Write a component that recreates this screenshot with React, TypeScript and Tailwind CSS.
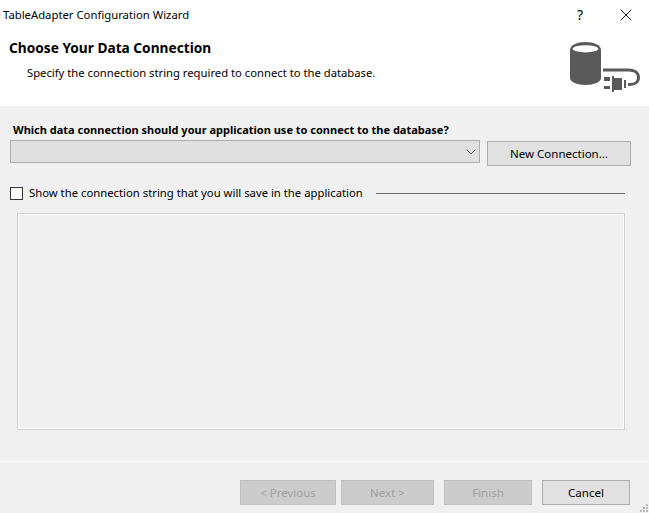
import { X, ChevronDown } from "lucide-react";

function DbPlugIcon() {
  return (
    <svg width="72" height="52" viewBox="0 0 72 52" className="block">
      {/* cylinder */}
      <path
        d="M0 8 C0 3 7 0 15.5 0 C24 0 31 3 31 8 L31 36 C31 40 24 43 15.5 43 C7 43 0 40 0 36 Z"
        fill="#595959"
      />
      <ellipse cx="15.5" cy="6.8" rx="12.8" ry="3.6" fill="#ffffff" />
      {/* cord */}
      <path d="M33 28 H59 C65.5 28 68.5 31.5 68.5 35.5 C68.5 40 65 42.5 60 42.5 H58" fill="none" stroke="#595959" strokeWidth="3" />
      {/* plug */}
      <rect x="34" y="35" width="6" height="4" fill="#595959" />
      <rect x="34" y="44" width="6" height="3" fill="#595959" />
      <rect x="42" y="34" width="2" height="16" fill="#595959" />
      <rect x="44" y="36" width="8" height="12" fill="#595959" />
      <rect x="54" y="38" width="2" height="8" fill="#595959" />
    </svg>
  );
}

function WizardButton({ label, disabled, className }: { label: string; disabled?: boolean; className: string }) {
  return (
    <div
      className={`h-[25px] flex items-center justify-center border text-[11.5px] ${
        disabled ? "bg-[#cccccc] border-[#bfbfbf] text-[#a0a0a0]" : "bg-[#e1e1e1] border-[#adadad] text-black"
      } ${className}`}
    >
      {label}
    </div>
  );
}

export default function App() {
  return (
    <div
      className="w-[649px] h-[513px] flex flex-col overflow-hidden bg-[#f0f0f0] text-[11.3px] leading-[16px] text-black relative"
      style={{ fontFamily: '"Noto Sans", "Open Sans", sans-serif' }}
    >
      {/* Title + header */}
      <div className="bg-white h-[106px] flex-shrink-0 flex flex-col">
        <div className="flex items-center h-[30px] pl-[3px]">
          <span className="flex-1">TableAdapter Configuration Wizard</span>
          <span className="w-[12px] text-center text-[14px] mr-[30px]">?</span>
          <X className="w-[20px] h-[20px] mr-[13px]" strokeWidth={1.1} />
        </div>
        <div className="flex pl-[9px]">
          <div className="flex-1">
            <h1 className="font-bold text-[13.7px] leading-[18px] mt-[9px]">Choose Your Data Connection</h1>
            <p className="ml-[18px] mt-[8px] text-[11.25px]">Specify the connection string required to connect to the database.</p>
          </div>
          <div className="mr-[7px] mt-[12px]">
            <DbPlugIcon />
          </div>
        </div>
      </div>

      {/* Body */}
      <div className="flex-1 flex flex-col">
        <p className="font-bold text-[11px] ml-[13px] mt-[16px]">Which data connection should your application use to connect to the database?</p>
        <div className="flex items-start ml-[10px] mt-[2px]">
          <div className="w-[470px] h-[23px] bg-[#e0e0e0] border border-[#adadad] flex items-center justify-end">
            <ChevronDown className="w-[16px] h-[16px] text-[#404040]" strokeWidth={1.25} />
          </div>
          <WizardButton label="New Connection..." className="w-[144px] ml-[7px] mt-px" />
        </div>

        <div className="flex items-center ml-[10px] mr-[24px] mt-[19px]">
          <div className="w-[13px] h-[13px] bg-white border border-[#333333]" />
          <span className="ml-[6px]">Show the connection string that you will save in the application</span>
          <div className="w-[249px] h-px bg-[#6d6d6d] ml-auto" />
        </div>

        <div className="ml-[17px] mt-[12px] w-[608px] h-[217px] bg-[#f0f0f0] border border-[#d0d0d0] shadow-[inset_-1px_-1px_0_#ffffff,inset_1px_1px_0_#ffffff]" />

        <div className="mt-[31px] h-px bg-white" />

        {/* Footer buttons */}
        <div className="flex mt-[18px] ml-[240px]">
          <WizardButton label="< Previous" disabled className="w-[96px]" />
          <WizardButton label="Next >" disabled className="w-[93px] ml-[5px]" />
          <WizardButton label="Finish" disabled className="w-[88px] ml-[10px]" />
          <WizardButton label="Cancel" className="w-[88px] ml-[10px]" />
        </div>
      </div>

      {/* Resize grip */}
      <svg width="10" height="10" viewBox="0 0 10 10" className="absolute right-0 bottom-0">
        <rect x="7" y="1" width="2" height="2" fill="#b8b8b8" />
        <rect x="4" y="4" width="2" height="2" fill="#b8b8b8" />
        <rect x="7" y="4" width="2" height="2" fill="#b8b8b8" />
        <rect x="1" y="7" width="2" height="2" fill="#b8b8b8" />
        <rect x="4" y="7" width="2" height="2" fill="#b8b8b8" />
        <rect x="7" y="7" width="2" height="2" fill="#b8b8b8" />
      </svg>
    </div>
  );
}
